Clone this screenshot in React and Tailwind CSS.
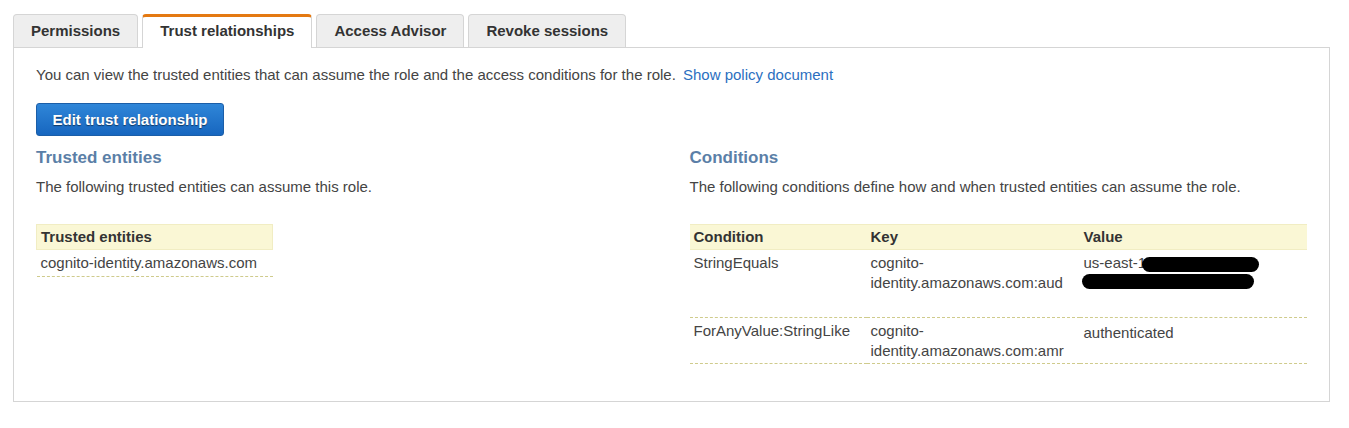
import React from "react";

const tabs = ["Permissions", "Trust relationships", "Access Advisor", "Revoke sessions"];

export default function App() {
  const active = "Trust relationships";

  return (
    <div className="min-h-[428px] bg-white pt-[14px] pl-[13px] pr-[19px] font-['Liberation_Sans',Arial,sans-serif] text-[15px] leading-[20px] text-[#444]">
      <div className="flex items-end">
        {tabs.map((t) =>
          t === active ? (
            <div
              key={t}
              className="relative z-10 -mb-px mr-[4px] h-[34px] rounded-t-[4px] border border-b-0 border-[#d5d5d5] border-t-[3px] border-t-[#e47911] bg-white px-[17px] pt-[4px] font-bold text-[#333]"
            >
              {t}
            </div>
          ) : (
            <div
              key={t}
              className="mr-[4px] h-[33px] rounded-t-[4px] border border-b-0 border-[#d5d5d5] bg-[#eeeeee] px-[17px] pt-[6px] font-bold text-[#333]"
            >
              {t}
            </div>
          )
        )}
      </div>

      <div className="border border-[#d5d5d5] px-[22px] pt-[17px] pb-[37px]">
        <p>
          You can view the trusted entities that can assume the role and the access conditions for the role.{" "}
          <span className="ml-[3px] text-[#2b6fbf]">Show policy document</span>
        </p>

        <button className="mt-[18px] h-[33px] w-[188px] rounded-[3px] border border-[#1b5ea8] bg-gradient-to-b from-[#2f86d8] to-[#1766bf] font-bold text-white [text-shadow:0_1px_1px_rgba(0,0,0,0.5)]">
          Edit trust relationship
        </button>

        <div className="grid grid-cols-2 gap-x-[36px]">
          <div>
            <h3 className="mt-[12px] text-[17px] font-bold leading-[20px] text-[#5b7fa7]">Trusted entities</h3>
            <p className="mt-[9px]">The following trusted entities can assume this role.</p>
            <table className="mt-[27px] w-[237px] border-collapse">
              <thead>
                <tr className="bg-[#faf7d5]">
                  <th className="h-[25px] border border-[#f1edc3] px-[4px] text-left font-bold text-[#333]">Trusted entities</th>
                </tr>
              </thead>
              <tbody>
                <tr className="border-b border-dashed border-[#cfcb8c]">
                  <td className="px-[4px] pt-[3px] pb-[3px]">cognito-identity.amazonaws.com</td>
                </tr>
              </tbody>
            </table>
          </div>

          <div>
            <h3 className="mt-[12px] text-[17px] font-bold leading-[20px] text-[#5b7fa7]">Conditions</h3>
            <p className="mt-[9px]">The following conditions define how and when trusted entities can assume the role.</p>
            <table className="mt-[27px] w-full table-fixed border-collapse">
              <thead>
                <tr className="bg-[#faf7d5]">
                  <th className="h-[25px] w-[177px] border-y border-[#f1edc3] px-[4px] text-left font-bold text-[#333]">Condition</th>
                  <th className="h-[25px] w-[213px] border-y border-[#f1edc3] px-[4px] text-left font-bold text-[#333]">Key</th>
                  <th className="h-[25px] border-y border-[#f1edc3] px-[4px] text-left font-bold text-[#333]">Value</th>
                </tr>
              </thead>
              <tbody>
                <tr className="border-b border-dashed border-[#cfcb8c] align-top">
                  <td className="h-[68px] px-[4px] pt-[3px]">StringEquals</td>
                  <td className="px-[4px] pt-[3px]">
                    cognito-
                    <br />
                    identity.amazonaws.com:aud
                  </td>
                  <td className="px-[4px] pt-[3px]">
                    <div className="flex items-center">
                      <span>us-east-1</span>
                      <span className="-ml-[4px] mt-[2px] inline-block h-[15px] w-[117px] rounded-[8px] bg-black"></span>
                    </div>
                    <span className="-ml-[2px] mt-[1px] block h-[15px] w-[172px] rounded-[8px] bg-black"></span>
                  </td>
                </tr>
                <tr className="border-b border-dashed border-[#cfcb8c] align-top">
                  <td className="h-[46px] px-[4px] pt-[3px]">ForAnyValue:StringLike</td>
                  <td className="px-[4px] pt-[3px]">
                    cognito-
                    <br />
                    identity.amazonaws.com:amr
                  </td>
                  <td className="px-[4px] pt-[5px]">authenticated</td>
                </tr>
              </tbody>
            </table>
          </div>
        </div>
      </div>
    </div>
  );
}
